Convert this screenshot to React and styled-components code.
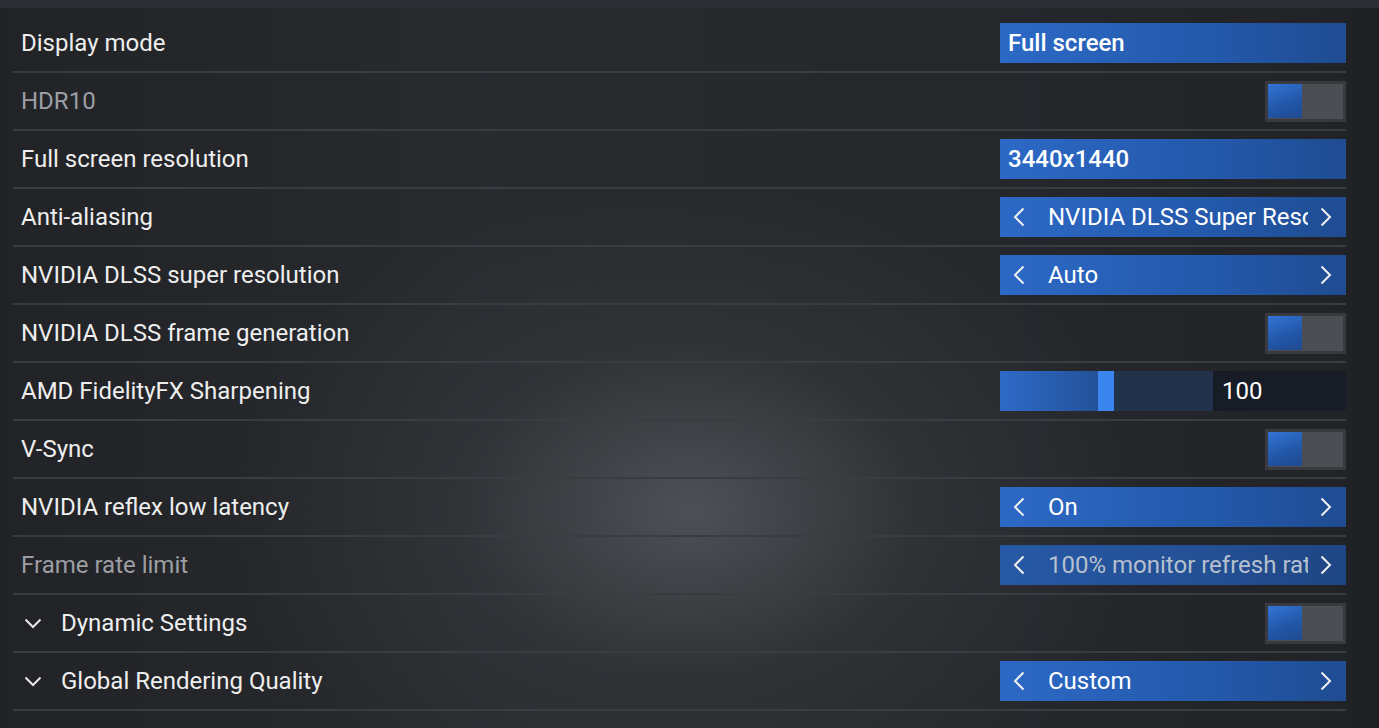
import styled, { createGlobalStyle } from "styled-components";

const GlobalStyle = createGlobalStyle`
  html, body {
    margin: 0;
    padding: 0;
    background: #222327;
  }
  * { box-sizing: border-box; }
`;

const settings = [
  { label: "Display mode", type: "field", value: "Full screen" },
  { label: "HDR10", type: "toggle", muted: true },
  { label: "Full screen resolution", type: "field", value: "3440x1440" },
  { label: "Anti-aliasing", type: "select", value: "NVIDIA DLSS Super Resolution" },
  { label: "NVIDIA DLSS super resolution", type: "select", value: "Auto" },
  { label: "NVIDIA DLSS frame generation", type: "toggle" },
  { label: "AMD FidelityFX Sharpening", type: "slider", value: 100 },
  { label: "V-Sync", type: "toggle" },
  { label: "NVIDIA reflex low latency", type: "select", value: "On" },
  { label: "Frame rate limit", type: "select", value: "100% monitor refresh rate", muted: true },
  { label: "Dynamic Settings", type: "toggle", group: true },
  { label: "Global Rendering Quality", type: "select", value: "Custom", group: true },
];

function Chevron({ dir }) {
  if (dir === "down") {
    return (
      <svg width="18" height="11" viewBox="0 0 18 11">
        <path d="M1.5 1.5 L9 9 L16.5 1.5" fill="none" stroke="currentColor" strokeWidth="2" />
      </svg>
    );
  }
  const d = dir === "left" ? "M10.5 1.5 L2 10 L10.5 18.5" : "M1.5 1.5 L10 10 L1.5 18.5";
  return (
    <svg width="12" height="20" viewBox="0 0 12 20">
      <path d={d} fill="none" stroke="currentColor" strokeWidth="2" />
    </svg>
  );
}

function Control({ item }) {
  if (item.type === "field") {
    return <Field>{item.value}</Field>;
  }
  if (item.type === "toggle") {
    return (
      <Toggle>
        <Thumb />
      </Toggle>
    );
  }
  if (item.type === "slider") {
    return (
      <Slider>
        <Track>
          <Fill />
          <Knob />
        </Track>
        <SliderValue>{item.value}</SliderValue>
      </Slider>
    );
  }
  return (
    <Select $muted={item.muted}>
      <Arrow><Chevron dir="left" /></Arrow>
      <SelectText>{item.value}</SelectText>
      <Arrow><Chevron dir="right" /></Arrow>
    </Select>
  );
}

export default function App() {
  return (
    <Page>
      <GlobalStyle />
      <TopStrip />
      <List>
        {settings.map((item) => (
          <Row key={item.label}>
            <Label $muted={item.muted}>
              {item.group && (
                <GroupIcon><Chevron dir="down" /></GroupIcon>
              )}
              {item.label}
            </Label>
            <Control item={item} />
          </Row>
        ))}
      </List>
    </Page>
  );
}

const Page = styled.div`
  width: 1379px;
  height: 728px;
  overflow: hidden;
  font-family: Roboto, "Liberation Sans", sans-serif;
  background:
    radial-gradient(ellipse 460px 330px at 690px 510px, rgba(88, 90, 96, 0.8), rgba(62, 64, 69, 0.4) 50%, rgba(34, 35, 39, 0) 100%),
    linear-gradient(90deg, #222327 0%, #272a2e 35%, #26272c 75%, #222327 97%, #1e1f22 100%);
`;

const TopStrip = styled.div`
  height: 8px;
  background: #2c2e33;
`;

const List = styled.div`
  padding: 7px 33px 0 13px;
`;

const Row = styled.div`
  height: 58px;
  display: flex;
  align-items: center;
  justify-content: space-between;
  padding-left: 8px;
  border-bottom: 2px solid #3a3c41;
`;

const Label = styled.div`
  display: flex;
  align-items: center;
  font-size: 24px;
  color: ${(p) => (p.$muted ? "#9c9ea3" : "#eeeeee")};
`;

const GroupIcon = styled.span`
  display: inline-flex;
  width: 40px;
  padding-left: 3px;
  color: #e8e8e8;
`;

const Field = styled.div`
  width: 346px;
  height: 40px;
  display: flex;
  align-items: center;
  padding-left: 8px;
  font-size: 24px;
  font-weight: 500;
  color: #ffffff;
  background: linear-gradient(90deg, #2c69c6 0%, #2459ab 60%, #1f4c92 100%);
`;

const Select = styled(Field)`
  padding: 0 14px 0 13px;
  font-weight: 400;
  color: ${(p) => (p.$muted ? "#b6c0cf" : "#ffffff")};
  background: ${(p) =>
    p.$muted
      ? "linear-gradient(90deg, #2759a6 0%, #234f94 60%, #1f4684 100%)"
      : "linear-gradient(90deg, #2c69c6 0%, #2459ab 60%, #1f4c92 100%)"};
`;

const Arrow = styled.span`
  display: inline-flex;
  width: 12px;
  color: #f0f0f0;
`;

const SelectText = styled.span`
  flex: 1;
  margin-left: 23px;
  margin-right: 12px;
  white-space: nowrap;
  overflow: hidden;
`;

const Toggle = styled.div`
  width: 81px;
  height: 41px;
  padding: 3px;
  background: #4d4e53;
  border: 3px solid #393a3f;
  display: flex;
`;

const Thumb = styled.div`
  width: 34px;
  height: 34px;
  margin: -3px 0 0 -3px;
  background: linear-gradient(160deg, #3274d6, #2256a6 60%, #1e4a90);
`;

const Slider = styled.div`
  width: 346px;
  height: 40px;
  display: flex;
`;

const Track = styled.div`
  width: 213px;
  height: 40px;
  display: flex;
  background: #22324a;
`;

const Fill = styled.div`
  width: 98px;
  background: linear-gradient(90deg, #2d6ac7, #24529a);
`;

const Knob = styled.div`
  width: 16px;
  background: #3a85f0;
`;

const SliderValue = styled.div`
  flex: 1;
  display: flex;
  align-items: center;
  padding-left: 9px;
  font-size: 24px;
  color: #ffffff;
  background: #171c27;
`;
